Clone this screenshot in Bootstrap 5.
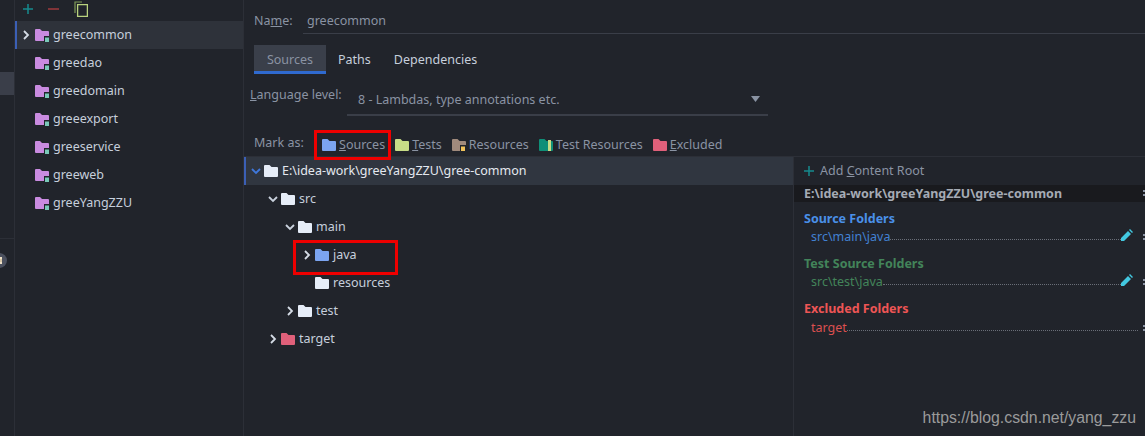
<!DOCTYPE html>
<html lang="en">
<head>
  <meta charset="UTF-8">
  <title>Project Structure</title>
  <link href="https://cdn.jsdelivr.net/npm/bootstrap@5.3.3/dist/css/bootstrap.min.css" rel="stylesheet">
  <style>
    html, body { height: 436px; overflow: hidden; }
    body {
      background-color: #21242b;
      color: #c6cfdc;
      font-family: "Noto Sans", sans-serif;
      font-size: 12.5px;
      line-height: 18px;
    }
    .stage { width: 1145px; height: 436px; position: relative; overflow: hidden; }
    .strip { width: 15px; border-right: 1px solid #2c2f37; overflow: hidden; }
    .strip-item { height: 23px; margin-top: 72px; background-color: #3a3e49; }
    .strip-sep { height: 1px; margin-top: 143px; background-color: #2c2f37; }
    .strip-badge { width: 15px; height: 15px; margin-top: 14px; margin-left: -8px; border-radius: 50%; background-color: #4b505e; padding: 4px 0 0 7px; }
    .strip-badge-mark { width: 3px; height: 7px; border-top: 2px solid #f0e2c8; border-bottom: 2px solid #f0e2c8; background-color: #d8c7a8; }
    .modules { width: 229px; border-right: 1px solid #2c2f37; }
    .mod-tools { height: 21px; padding: 0 0 3px 8px; gap: 15px; }
    .mod-row { height: 28px; padding-left: 20px; gap: 4px; color: #c6cfdc; }
    .mod-row.is-active { background-color: #2e323a; border-left: 2px solid #3b5fb5; padding-left: 5px; }
    .mod-row.is-active svg.chev { margin-right: 1px; }
    .main-col { width: 901px; }
    .name-row { height: 34px; padding: 6px 0 0 10px; }
    .name-label { width: 49px; padding-top: 6px; color: #8a93a3; }
    .name-val { flex: 1; height: 28px; border-bottom: 1px solid #3a3e48; color: #8a93a3; padding: 6px 0 0 4px; }
    .tab-row { height: 40px; padding: 11px 0 0 10px; }
    .tab-item { height: 29px; padding-top: 6px; margin-right: 23px; color: #c6cfdc; }
    .tab-item.is-on { width: 72px; margin-right: 12px; text-align: center; background-color: #3a3f4a; border-bottom: 3px solid #2f6ad0; color: #8a93a3; }
    .lang-row { height: 42px; padding-left: 6px; }
    .lang-label { width: 97px; padding-top: 12px; color: #8a93a3; }
    .lang-box { width: 421px; height: 42px; border-bottom: 2px solid #3a3e48; padding: 17px 0 0 11px; color: #8a93a3; }
    .lang-caret { margin: 5px 8px 0 0; }
    .mark-row { height: 40px; padding: 18px 0 0 10px; color: #8a93a3; }
    .mark-label { width: 68px; }
    .mark-item { margin: 1px 10px 0 0; gap: 3px; height: 20px; }
    .body-row { height: 280px; border-top: 1px solid #2c2f37; }
    .tree { width: 550px; border-right: 1px solid #2c2f37; }
    .tree-row { height: 28px; gap: 4px; }
    .tree-row.is-active { background-color: #303640; border-left: 2px solid #3b5fb5; color: #e4e8ef; padding-left: 5px; }
    .tree-row svg.chev { margin-right: -1px; }
    .lvl-1 { padding-left: 24px; }
    .lvl-2 { padding-left: 41px; }
    .lvl-3 { padding-left: 58px; }
    .lvl-3x { padding-left: 71px; }
    .side { flex: 1; }
    .side-add { height: 28px; padding-left: 10px; gap: 6px; color: #8a93a3; }
    .side-path { height: 17px; background-color: #191a1e; padding-left: 10px; font-weight: 700; color: #a5abb5; line-height: 17px; }
    .side-title { height: 18px; margin-top: 7px; padding-left: 10px; font-weight: 700; }
    .side-path + .side-title { margin-top: 8px; }
    .side-entry { height: 20px; padding-left: 17px; }
    .side-entry.excl-sub { padding-top: 1px; }
    .side-title + .side-entry + .side-title { margin-top: 7px; }
    .dots { flex: 1; height: 12px; border-bottom: 1px dotted #6a6e78; }
    .pen-ic { margin: 1px 10px 0 0; }
    .grip { width: 2px; height: 6px; margin-top: 6px; border-top: 2px solid #8a93a3; border-bottom: 2px solid #8a93a3; }
    .grip-end { margin-left: 5px; }
    .side-path .grip { margin-top: 5px; }
    .src-col { color: #4a90e8; }
    .src-sub { color: #4181d2; }
    .test-col { color: #43845a; }
    .excl-col { color: #ee5555; }
    .excl-sub { color: #dc5050; }
    .annot { position: absolute; border: 3px solid #ee0000; }
    .annot-a { left: 314px; top: 130px; width: 77px; height: 30px; }
    .annot-b { left: 293px; top: 240px; width: 105px; height: 35px; }
    .wm { position: absolute; right: 9px; top: 408px; font-family: "Liberation Sans", sans-serif; font-size: 15.8px; line-height: 20px; color: #9b9b9b; }
  </style>
</head>
<body>
  <svg width="0" height="0" class="d-block">
    <defs>
      <symbol id="fold" viewBox="0 0 14 12"><path d="M1 0h4.5l2 2H13a1 1 0 0 1 1 1v8a1 1 0 0 1-1 1H1a1 1 0 0 1-1-1V1a1 1 0 0 1 1-1z"/></symbol>
      <symbol id="chev-r" viewBox="0 0 8 10"><path d="M2 1l4 4-4 4" fill="none" stroke="#d5dce6" stroke-width="1.8"/></symbol>
      <symbol id="chev-d" viewBox="0 0 10 8"><path d="M1 2l4 4 4-4" fill="none" stroke="#c9d1dd" stroke-width="1.8"/></symbol>
      <symbol id="chev-blue" viewBox="0 0 10 8"><path d="M1 2l4 4 4-4" fill="none" stroke="#3f78dc" stroke-width="1.8"/></symbol>
      <symbol id="modf" viewBox="0 0 14 13"><path fill="#c98be0" d="M1 0h4l2 2h6a1 1 0 0 1 1 1v8a1 1 0 0 1-1 1H1a1 1 0 0 1-1-1V1a1 1 0 0 1 1-1z"/><path fill="#21242b" d="M9 7h5v6H9z"/><path fill="#79c9b8" d="M10 8.500h4V13h-4z"/></symbol>
      <symbol id="pen" viewBox="0 0 12 12"><path fill="#43c8e0" d="M0 12v-3l7-7 3 3-7 7zM8 1l1-1 3 3-1 1z"/></symbol>
    </defs>
  </svg>
  <div class="stage d-flex">
    <div class="strip flex-shrink-0">
      <div class="strip-item"></div>
      <div class="strip-sep"></div>
      <div class="strip-badge"><div class="strip-badge-mark"></div></div>
    </div>

    <div class="modules flex-shrink-0">
      <div class="mod-tools d-flex align-items-center">
        <svg width="10" height="10" viewBox="0 0 10 10"><path d="M5 0v10M0 5h10" stroke="#168a8f" stroke-width="1.500"/></svg>
        <svg width="11" height="10" viewBox="0 0 11 10"><path d="M0 5h11" stroke="#a13a3e" stroke-width="1.500"/></svg>
        <svg width="14" height="16" viewBox="0 0 14 16"><path d="M8 1H1v11" fill="none" stroke="#7f9a58" stroke-width="1.200"/><path d="M3.600 3.600h9.800v11.800H3.600z" fill="none" stroke="#b9d27e" stroke-width="1.300"/></svg>
      </div>
      <div class="mod-row is-active d-flex align-items-center"><svg class="chev" width="8" height="10"><use href="#chev-r"/></svg><svg width="14" height="13"><use href="#modf"/></svg><span>greecommon</span></div>
      <div class="mod-row d-flex align-items-center"><svg width="14" height="13"><use href="#modf"/></svg><span>greedao</span></div>
      <div class="mod-row d-flex align-items-center"><svg width="14" height="13"><use href="#modf"/></svg><span>greedomain</span></div>
      <div class="mod-row d-flex align-items-center"><svg width="14" height="13"><use href="#modf"/></svg><span>greeexport</span></div>
      <div class="mod-row d-flex align-items-center"><svg width="14" height="13"><use href="#modf"/></svg><span>greeservice</span></div>
      <div class="mod-row d-flex align-items-center"><svg width="14" height="13"><use href="#modf"/></svg><span>greeweb</span></div>
      <div class="mod-row d-flex align-items-center"><svg width="14" height="13"><use href="#modf"/></svg><span>greeYangZZU</span></div>
    </div>

    <div class="main-col flex-shrink-0">
      <div class="name-row d-flex">
        <div class="name-label">Na<u>m</u>e:</div>
        <div class="name-val">greecommon</div>
      </div>
      <div class="tab-row d-flex">
        <div class="tab-item is-on">Sources</div>
        <div class="tab-item">Paths</div>
        <div class="tab-item">Dependencies</div>
      </div>
      <div class="lang-row d-flex">
        <div class="lang-label"><u>L</u>anguage level:</div>
        <div class="lang-box d-flex justify-content-between">
          <span>8 - Lambdas, type annotations etc.</span>
          <svg class="lang-caret" width="9" height="6" viewBox="0 0 9 6"><path d="M0 0h9L4.500 6z" fill="#8a93a3"/></svg>
        </div>
      </div>
      <div class="mark-row d-flex">
        <div class="mark-label">Mark as:</div>
        <div class="mark-item d-flex align-items-center"><svg width="14" height="12" fill="#7ba4f0"><use href="#fold"/></svg><span><u>S</u>ources</span></div>
        <div class="mark-item d-flex align-items-center"><svg width="14" height="12" fill="#c7dc86"><use href="#fold"/></svg><span><u>T</u>ests</span></div>
        <div class="mark-item d-flex align-items-center"><svg width="14" height="12" viewBox="0 0 14 12"><use href="#fold" fill="#a08a7c"/><path d="M8 6h6v6H8z" fill="#21242b"/><path d="M9 7.500h4V12H9z" fill="#f0c25a"/></svg><span>Resources</span></div>
        <div class="mark-item d-flex align-items-center"><svg width="14" height="12" viewBox="0 0 14 12"><use href="#fold" fill="#0f8f78"/><path d="M9 1h3v11H9z" fill="#c7dc86"/></svg><span>Test Resources</span></div>
        <div class="mark-item d-flex align-items-center"><svg width="14" height="12" fill="#e0607a"><use href="#fold"/></svg><span><u>E</u>xcluded</span></div>
      </div>

      <div class="body-row d-flex">
        <div class="tree flex-shrink-0">
          <div class="tree-row is-active d-flex align-items-center"><svg class="chev" width="10" height="8"><use href="#chev-blue"/></svg><svg width="14" height="12" fill="#e6edf8"><use href="#fold"/></svg><span>E:\idea-work\greeYangZZU\gree-common</span></div>
          <div class="tree-row lvl-1 d-flex align-items-center"><svg class="chev" width="10" height="8"><use href="#chev-d"/></svg><svg width="14" height="12" fill="#e6edf8"><use href="#fold"/></svg><span>src</span></div>
          <div class="tree-row lvl-2 d-flex align-items-center"><svg class="chev" width="10" height="8"><use href="#chev-d"/></svg><svg width="14" height="12" fill="#e6edf8"><use href="#fold"/></svg><span>main</span></div>
          <div class="tree-row lvl-3 d-flex align-items-center"><svg class="chev" width="10" height="10"><use href="#chev-r"/></svg><svg width="14" height="12" fill="#7ba4f0"><use href="#fold"/></svg><span>java</span></div>
          <div class="tree-row lvl-3x d-flex align-items-center"><svg width="14" height="12" fill="#e6edf8"><use href="#fold"/></svg><span>resources</span></div>
          <div class="tree-row lvl-2 d-flex align-items-center"><svg class="chev" width="10" height="10"><use href="#chev-r"/></svg><svg width="14" height="12" fill="#e6edf8"><use href="#fold"/></svg><span>test</span></div>
          <div class="tree-row lvl-1 d-flex align-items-center"><svg class="chev" width="10" height="10"><use href="#chev-r"/></svg><svg width="14" height="12" fill="#e0607a"><use href="#fold"/></svg><span>target</span></div>
        </div>
        <div class="side">
          <div class="side-add d-flex align-items-center"><svg width="10" height="10" viewBox="0 0 10 10"><path d="M5 0v10M0 5h10" stroke="#168a8f" stroke-width="1.500"/></svg><span>Add <u>C</u>ontent Root</span></div>
          <div class="side-path d-flex justify-content-between"><span>E:\idea-work\greeYangZZU\gree-common</span><div class="grip"></div></div>
          <div class="side-title src-col">Source Folders</div>
          <div class="side-entry src-sub d-flex"><span>src\main\java</span><div class="dots"></div><svg class="pen-ic" width="12" height="12"><use href="#pen"/></svg><div class="grip"></div></div>
          <div class="side-title test-col">Test Source Folders</div>
          <div class="side-entry test-col d-flex"><span>src\test\java</span><div class="dots"></div><svg class="pen-ic" width="12" height="12"><use href="#pen"/></svg><div class="grip"></div></div>
          <div class="side-title excl-col">Excluded Folders</div>
          <div class="side-entry excl-sub d-flex"><span>target</span><div class="dots"></div><div class="grip grip-end"></div></div>
        </div>
      </div>
    </div>

    <div class="annot annot-a"></div>
    <div class="annot annot-b"></div>
    <div class="wm">https://blog.csdn.net/yang_zzu</div>
  </div>
  <script src="https://cdn.jsdelivr.net/npm/bootstrap@5.3.3/dist/js/bootstrap.bundle.min.js"></script>
</body>
</html>
